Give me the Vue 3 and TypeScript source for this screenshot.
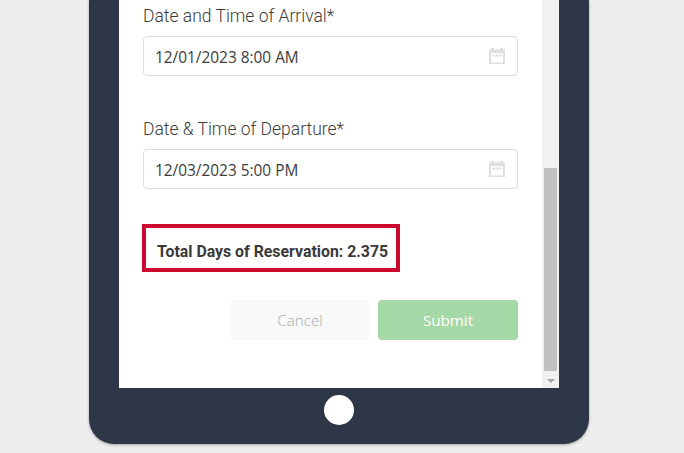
<script setup lang="ts">
// 预约表单（平板外框）
interface DateField {
  label: string
  value: string
}

const fields: DateField[] = [
  { label: 'Date and Time of Arrival*', value: '12/01/2023 8:00 AM' },
  { label: 'Date & Time of Departure*', value: '12/03/2023 5:00 PM' },
]
</script>

<template>
  <div class="page">
    <div class="tablet">
      <div class="screen">
        <div class="form">
          <div v-for="field in fields" :key="field.label" class="field">
            <label class="field__label">{{ field.label }}</label>
            <div class="field__input">
              <span class="field__value">{{ field.value }}</span>
              <svg class="field__icon" width="16" height="16" viewBox="0 0 16 16">
                <path fill="#dedede" d="M0 1.500h2V0h3v1.500h6V0h3v1.500h2V16H0z" />
                <path fill="#fff" d="M2 5h12v9.500H2z" />
                <path fill="#dedede" d="M3.500 6.500h2.500v2H3.500zM6.800 6.500h2.500v2H6.800zM10 6.500h2.500v2H10z" />
              </svg>
            </div>
          </div>
          <div class="total">Total Days of Reservation: 2.375</div>
          <div class="actions">
            <button type="button" class="btn btn--cancel">Cancel</button>
            <button type="button" class="btn btn--submit">Submit</button>
          </div>
        </div>
        <div class="scrollbar">
          <div class="scrollbar__track">
            <div class="scrollbar__thumb" />
          </div>
          <div class="scrollbar__arrow" />
        </div>
      </div>
      <div class="home" />
    </div>
  </div>
</template>

<style>
html,
body {
  margin: 0;
  background: #eee;
}
</style>

<style scoped>
.page {
  width: 684px;
  height: 453px;
  overflow: hidden;
  padding-left: 89px;
  box-sizing: border-box;
  background: #eee;
}

.tablet {
  width: 500px;
  height: 444px;
  box-sizing: border-box;
  padding: 0 30px;
  background: #2d3748;
  border-radius: 0 0 25px 25px;
  box-shadow: 0 1px 3px rgba(0, 0, 0, 0.3);
  display: flex;
  flex-direction: column;
  align-items: center;
}

.screen {
  width: 440px;
  height: 388px;
  flex: none;
  background: #fff;
  display: flex;
}

.form {
  flex: 1;
  padding: 5px 24px 0;
  box-sizing: border-box;
}

.field + .field {
  margin-top: 42px;
}

.field__label {
  display: block;
  height: 20px;
  padding-top: 1px;
  margin-bottom: 10px;
  font-family: Roboto, sans-serif;
  font-weight: 300;
  font-size: 17.5px;
  line-height: 21px;
  color: #3c3c3c;
}

.field__input {
  height: 40px;
  box-sizing: border-box;
  padding: 0 12px 0 11px;
  border: 1px solid #ddd;
  border-radius: 4px;
  display: flex;
  align-items: center;
  justify-content: space-between;
  font-family: 'Open Sans', sans-serif;
  font-size: 15.4px;
  color: #3c3c3c;
}

.field__value {
  padding-top: 2px;
}

.field__icon {
  flex: none;
}

.total {
  width: 258px;
  height: 48px;
  box-sizing: border-box;
  margin: 35px 0 28px -1px;
  padding: 6px 0 0 11px;
  border: 4px solid #cc0a2e;
  display: flex;
  align-items: center;
  font-family: Roboto, sans-serif;
  font-weight: 700;
  font-size: 15.85px;
  color: #3a3a3a;
}

.actions {
  display: flex;
  justify-content: flex-end;
  gap: 8px;
}

.btn {
  width: 140px;
  height: 40px;
  border: none;
  border-radius: 4px;
  font-family: 'Open Sans', sans-serif;
  font-size: 15.2px;
}

.btn--cancel {
  background: #f9f9f9;
  color: #aaa;
  font-weight: 300;
}

.btn--submit {
  background: #a5d8a7;
  color: #fff;
  font-weight: 500;
}

.scrollbar {
  width: 17px;
  flex: none;
  background: #f1f1f1;
  display: flex;
  flex-direction: column;
  align-items: center;
}

.scrollbar__track {
  flex: 1;
  width: 100%;
  padding-top: 168px;
  box-sizing: border-box;
}

.scrollbar__thumb {
  width: 13px;
  height: 203px;
  margin: 0 auto;
  background: #c1c1c1;
}

.scrollbar__arrow {
  width: 0;
  height: 0;
  margin: 0 0 5px;
  border-left: 4px solid transparent;
  border-right: 4px solid transparent;
  border-top: 4px solid #a3a3a3;
}

.home {
  width: 30px;
  height: 30px;
  margin-top: 7px;
  background: #fff;
  border-radius: 50%;
}
</style>
